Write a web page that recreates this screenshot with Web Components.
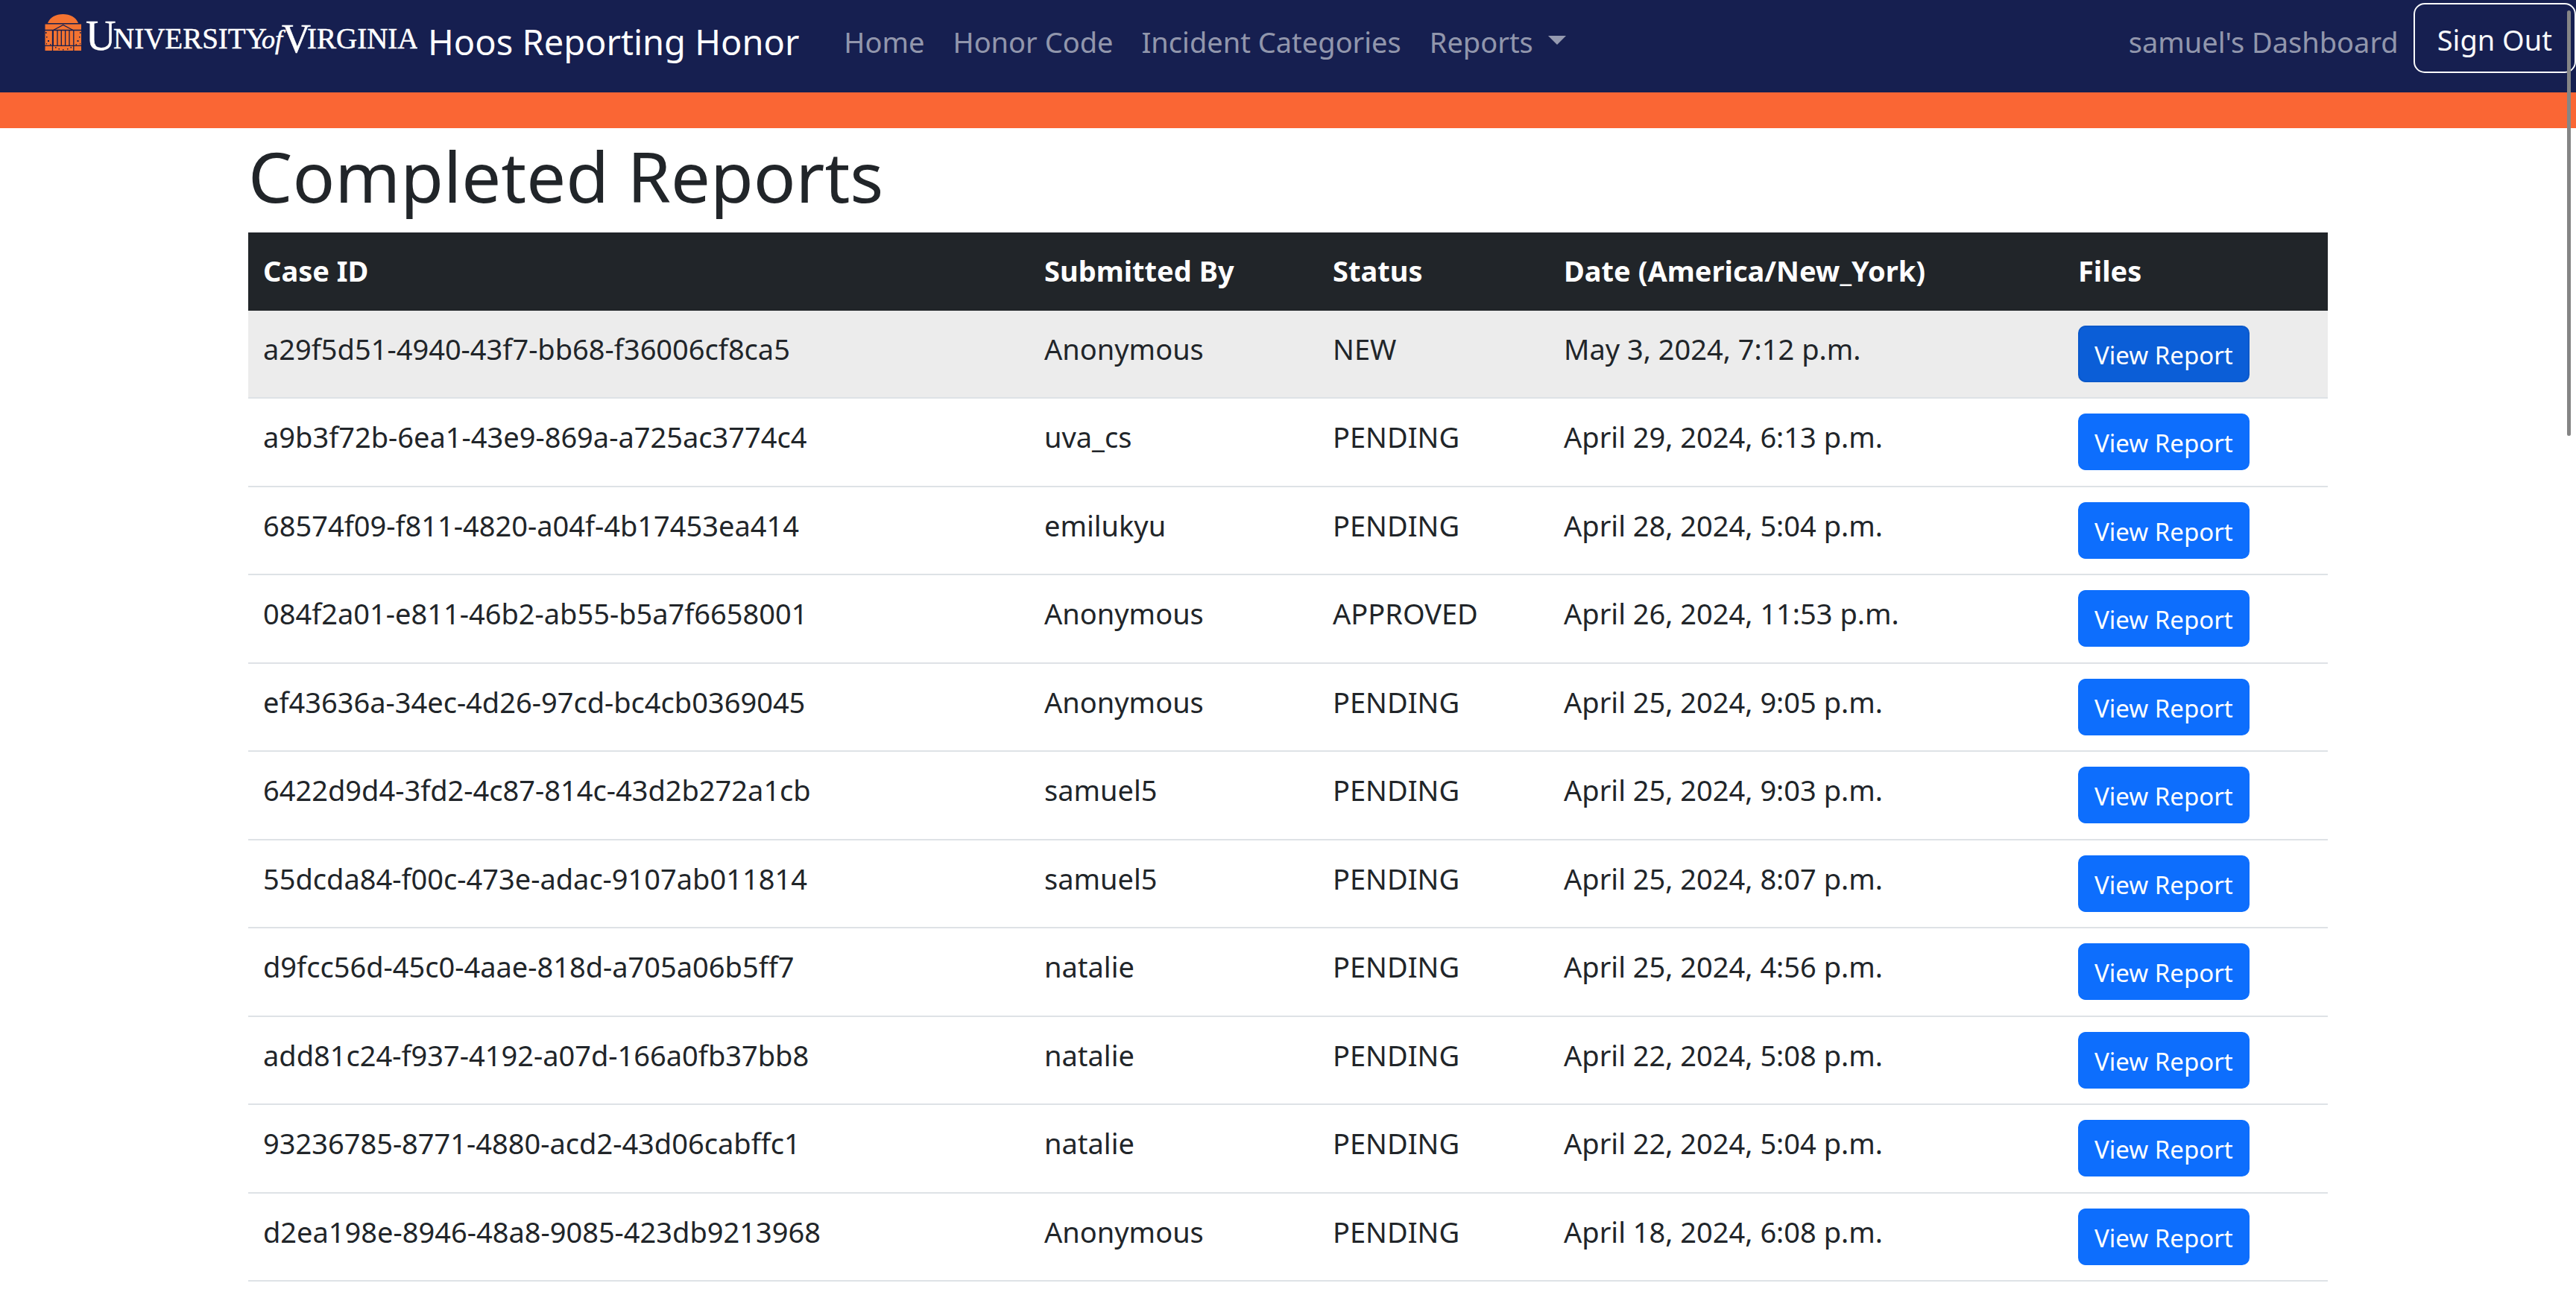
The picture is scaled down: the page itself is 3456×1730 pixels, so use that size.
<!DOCTYPE html>
<html lang="en">
<head>
<meta charset="utf-8">
<title>Completed Reports</title>
<style>
  body {
    margin: 0;
    background: #fff;
    color: #212529;
    font: 38px/60px "Noto Sans", "Open Sans", sans-serif;
  }
</style>
</head>
<body>
<site-header>
  <nav-link href="#home">Home</nav-link>
  <nav-link href="#code">Honor Code</nav-link>
  <nav-link href="#categories">Incident Categories</nav-link>
  <nav-menu>Reports</nav-menu>
  <nav-link slot="account" href="#dashboard">samuel's Dashboard</nav-link>
  <sign-out slot="account">Sign Out</sign-out>
</site-header>
<page-container>
  <span slot="title">Completed Reports</span>
  <report-table></report-table>
</page-container>
<scroll-thumb></scroll-thumb>

<script>
  function define(name, html) {
    customElements.define(name, class extends HTMLElement {
      constructor() {
        super();
        this.attachShadow({ mode: 'open' }).innerHTML = html;
      }
    });
  }

  customElements.define('nav-link', class extends HTMLElement {
    connectedCallback() {
      this.attachShadow({ mode: 'open' }).innerHTML = `
        <style>
          :host { display: block; }
          a { color: rgba(255,255,255,.55); text-decoration: none; white-space: nowrap; }
        </style>
        <a href="${this.getAttribute('href')}"><slot></slot></a>`;
    }
  });

  define('nav-menu', `
    <style>
      :host { display: block; }
      button {
        display: flex; align-items: center; gap: 20px; padding: 0; border: 0;
        background: none; color: rgba(255,255,255,.55); font: inherit;
      }
      i { margin-bottom: 4px; border: 12px solid transparent; border-top-color: currentColor; border-bottom: 0; }
    </style>
    <button type="button" aria-haspopup="true"><slot></slot><i></i></button>`);

  define('sign-out', `
    <style>
      :host { display: block; align-self: flex-start; margin-top: 4px; }
      button {
        display: block; padding: 17px 30px 13px; border: 2px solid #f8f9fa; border-radius: 15px;
        background: none; color: #f8f9fa; font: inherit; white-space: nowrap;
      }
    </style>
    <button type="button"><slot></slot></button>`);

  define('brand-logo', `
    <style>
      :host { display: block; }
      svg { display: block; }
      text { font-family: "Liberation Serif", serif; fill: #fff; stroke: #fff; stroke-width: .5; }
    </style>
    <svg width="500" height="64" viewBox="60 20 500 64" role="img" aria-label="University of Virginia">
      <path fill="#f47331" d="M64 33C67 25 75 21 84.500 21S102 25 105 33ZM60.500 34.500H109V70H60.500Z"/>
      <g fill="none" stroke="#161f50" stroke-width="1.300">
        <path d="M60 42.500H109M60 63.300H109M70.500 42V70M98.800 42V70"/>
        <path d="M71.500 42.500L84.700 35.500L98 42.500M71.300 43V63M77 43V63M82.300 43V63M87.600 43V63M93 43V63"/>
      </g>
      <path fill="#161f50" d="M61 45h1.500v2H61zM107 45h1.500v2H107zM62 51h1.500v1.500H62zM106 51h1.500v1.500H106zM64 56h2v2h-2zM103.500 56h2v2h-2zM67 61h1.500v1.500H67zM101.500 61h1.500v1.500h-1.500zM62 60h1v1.500h-1zM107 60h1v1.500h-1zM74 65h1.500v1.500H74zM78.500 67h1.500v1.500h-1.500zM84 68h1.500v1.500H84zM90 67h1.500v1.500H90zM94.500 65H96v1.500h-1.500z"/>
      <text x="115" y="69" font-size="56">U</text>
      <text x="152" y="67" font-size="39">NIVERSITY</text>
      <text x="351" y="67" font-size="36" font-style="italic">of</text>
      <text x="378" y="72" font-size="54">V</text>
      <text x="412" y="67" font-size="39">IRGINIA</text>
    </svg>`);

  define('site-header', `
    <style>
      :host { display: block; background: #161f50; border-bottom: 48px solid #fa6634; }
      header { display: flex; align-items: center; height: 112px; padding: 0 0 12px 60px; }
      .brand {
        display: flex; align-items: center; gap: 14px; color: #fff; text-decoration: none;
        font-size: 47px; line-height: 76px; white-space: nowrap;
      }
      brand-logo { padding-bottom: 12px; }
      nav { display: flex; flex: 1; gap: 38px; margin-left: 60px; }
      .account { display: flex; align-items: center; align-self: stretch; gap: 20px; }
    </style>
    <header>
      <a class="brand" href="#top"><brand-logo></brand-logo><span>Hoos Reporting Honor</span></a>
      <nav><slot></slot></nav>
      <div class="account"><slot name="account"></slot></div>
    </header>`);

  define('page-container', `
    <style>
      :host { display: block; max-width: 2790px; margin: 0 auto; }
      h1 { margin: 0 0 12px; font-size: 94px; line-height: 128px; font-weight: 400; }
    </style>
    <main><h1><slot name="title"></slot></h1><slot></slot></main>`);

  customElements.define('view-report', class extends HTMLElement {
    constructor() {
      super();
      this.attachShadow({ mode: 'open' }).innerHTML = `
        <style>
          :host { display: block; }
          button {
            display: block; box-sizing: border-box; padding: 12px 20px 8px; border: 2px solid #0d6efd;
            border-radius: 10px; background: #0d6efd; color: #fff; font: inherit;
            font-size: 33px; line-height: 52px; white-space: nowrap;
          }
          :host([active]) button { background: #0b5ed7; border-color: #0a58ca; }
        </style>
        <button type="button"><slot></slot></button>`;
    }
  });

  const reports = [
    ['a29f5d51-4940-43f7-bb68-f36006cf8ca5', 'Anonymous', 'NEW', 'May 3, 2024, 7:12 p.m.'],
    ['a9b3f72b-6ea1-43e9-869a-a725ac3774c4', 'uva_cs', 'PENDING', 'April 29, 2024, 6:13 p.m.'],
    ['68574f09-f811-4820-a04f-4b17453ea414', 'emilukyu', 'PENDING', 'April 28, 2024, 5:04 p.m.'],
    ['084f2a01-e811-46b2-ab55-b5a7f6658001', 'Anonymous', 'APPROVED', 'April 26, 2024, 11:53 p.m.'],
    ['ef43636a-34ec-4d26-97cd-bc4cb0369045', 'Anonymous', 'PENDING', 'April 25, 2024, 9:05 p.m.'],
    ['6422d9d4-3fd2-4c87-814c-43d2b272a1cb', 'samuel5', 'PENDING', 'April 25, 2024, 9:03 p.m.'],
    ['55dcda84-f00c-473e-adac-9107ab011814', 'samuel5', 'PENDING', 'April 25, 2024, 8:07 p.m.'],
    ['d9fcc56d-45c0-4aae-818d-a705a06b5ff7', 'natalie', 'PENDING', 'April 25, 2024, 4:56 p.m.'],
    ['add81c24-f937-4192-a07d-166a0fb37bb8', 'natalie', 'PENDING', 'April 22, 2024, 5:08 p.m.'],
    ['93236785-8771-4880-acd2-43d06cabffc1', 'natalie', 'PENDING', 'April 22, 2024, 5:04 p.m.'],
    ['d2ea198e-8946-48a8-9085-423db9213968', 'Anonymous', 'PENDING', 'April 18, 2024, 6:08 p.m.']
  ];

  customElements.define('report-table', class extends HTMLElement {
    constructor() {
      super();
      const rows = reports.map((cells, i) => `<tr${i ? '' : ' class="hover"'}>` +
        cells.map(c => `<td>${c}</td>`).join('') +
        `<td><view-report${i ? '' : ' active'}>View Report</view-report></td></tr>`).join('');
      this.attachShadow({ mode: 'open' }).innerHTML = `
        <style>
          :host { display: block; }
          table { width: 100%; table-layout: fixed; border-spacing: 0; }
          th, td { padding: 20px; text-align: left; vertical-align: top; white-space: nowrap; line-height: 62px; }
          th { background: #212529; color: #fff; font-weight: 700; padding-bottom: 23px; }
          td { border-bottom: 2px solid #dee2e6; }
          tbody tr { height: 118px; }
          tbody tr:nth-child(even) { height: 119px; }
          .hover { background: #ececec; }
          .case { width: 1048px; } .by { width: 387px; } .status { width: 310px; }
          .date { width: 690px; } .files { width: 355px; }
        </style>
        <table>
          <colgroup><col class="case"><col class="by"><col class="status"><col class="date"><col class="files"></colgroup>
          <thead><tr><th>Case ID</th><th>Submitted By</th><th>Status</th><th>Date (America/New_York)</th><th>Files</th></tr></thead>
          <tbody>${rows}</tbody>
        </table>`;
    }
  });

  define('scroll-thumb', `
    <style>
      :host { position: fixed; top: 14px; right: 7px; width: 5px; height: 33vh; border-radius: 3px; background: #858585; }
    </style>`);
</script>
</body>
</html>
